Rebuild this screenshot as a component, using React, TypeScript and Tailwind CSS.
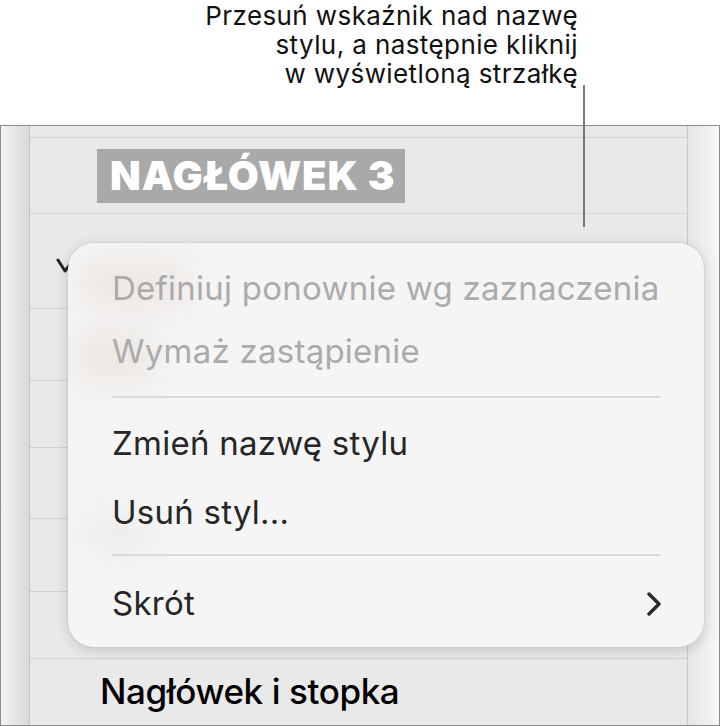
import React from "react";

const sans = { fontFamily: "Inter, 'Noto Sans', sans-serif" };

function Row({ h, children, last, top }: { h: string; children?: React.ReactNode; last?: boolean; top?: boolean }) {
  return (
    <div className={`${h} ${last ? "" : "border-b border-[#d3d3d3]"} flex ${top ? "items-start" : "items-center"}`}>
      {children}
    </div>
  );
}

function MenuItem({
  label,
  h,
  muted,
  arrow,
}: {
  label: string;
  h: string;
  muted?: boolean;
  arrow?: boolean;
}) {
  return (
    <div className={`${h} flex items-center justify-between pl-[44px] pr-[44px]`}>
      <span className={`whitespace-nowrap text-[33px] tracking-[0.25px] ${muted ? "text-[#ababab]" : "text-[#262626]"}`}>
        {label}
      </span>
      {arrow && (
        <svg width="16" height="24" viewBox="0 0 16 24" className="mr-[-2px]">
          <path d="M3 2 L13 12 L3 22" fill="none" stroke="#2a2a2a" strokeWidth="3.4" strokeLinecap="round" strokeLinejoin="round" />
        </svg>
      )}
    </div>
  );
}

export default function App() {
  return (
    <div className="relative w-[721px] h-[726px] bg-white overflow-hidden" style={sans}>
      {/* callout text */}
      <div className="h-[125px] pr-[143px] pt-[1px] text-right text-[26px] tracking-[0.4px] leading-[29px] text-[#111]">
        <div>Przesuń wskaźnik nad nazwę</div>
        <div>stylu, a następnie kliknij</div>
        <div>w wyświetloną strzałkę</div>
      </div>

      {/* styles sidebar */}
      <div className="flex h-[601px] border-t border-l border-r border-b border-[#8c8c8c] w-[720px]">
        <div className="w-[29px] bg-gradient-to-r from-[#f4f4f6] to-[#d9d9dd] border-r border-[#c4c4c4]" />
        <div className="flex-1 bg-[#e9e9e9] flex flex-col">
          <Row h="h-[12px]" />
          <Row h="h-[76px]">
            <div className="ml-[67px] h-[54px] w-[308px] bg-[#a9a9a9] flex items-center pl-[13px]">
              <span className="text-white font-black text-[40px] tracking-[0.9px] leading-none">NAGŁÓWEK 3</span>
            </div>
          </Row>
          <Row h="h-[95px]" top>
            <svg width="30" height="24" viewBox="0 0 30 24" className="ml-[24px] mt-[41px] overflow-visible">
              <path d="M4 5 L11 16 L28 -6" fill="none" stroke="#262626" strokeWidth="3" strokeLinecap="round" strokeLinejoin="round" />
            </svg>
          </Row>
          <Row h="h-[72px]" />
          <Row h="h-[67px]" />
          <Row h="h-[71px]" />
          <Row h="h-[73px]" />
          <Row h="h-[67px]" />
          <Row h="h-[62px]" last>
            <span className="ml-[70px] mt-[3px] text-[35px] font-medium text-black tracking-[-0.4px]">Nagłówek i stopka</span>
          </Row>
        </div>
        <div className="w-[32px] bg-gradient-to-r from-[#e6e6e8] to-[#f6f6f8] border-l border-[#c8c8c8]" />
      </div>

      {/* pointer line of the callout */}
      <div className="absolute left-[583px] top-[85px] w-[2px] h-[142px] bg-[#7a7a7a]" />

      {/* context menu */}
      <div className="absolute left-[68px] top-[243px] w-[636px] h-[404px] rounded-[26px] bg-[#f5f5f5] shadow-[0_3px_14px_rgba(0,0,0,0.16),0_0_2px_rgba(0,0,0,0.12)] overflow-hidden">
        <div className="absolute left-[10px] top-[14px] w-[110px] h-[52px] rounded-full bg-[#e6dbd3] opacity-50 blur-[16px]" />
        <div className="absolute left-[0px] top-[90px] w-[90px] h-[50px] rounded-full bg-[#e4d9d1] opacity-50 blur-[16px]" />
        <div className="absolute left-[10px] top-[270px] w-[80px] h-[40px] rounded-full bg-[#e6e0dc] opacity-40 blur-[16px]" />
        <div className="relative flex flex-col pt-[14px]">
          <MenuItem label="Definiuj ponownie wg zaznaczenia" h="h-[64px]" muted />
          <MenuItem label="Wymaż zastąpienie" h="h-[62px]" muted />
          <div className="h-[28px] flex items-center px-[44px]">
            <div className="h-[2px] w-full bg-[#dadada]" />
          </div>
          <MenuItem label="Zmień nazwę stylu" h="h-[66px]" />
          <MenuItem label="Usuń styl..." h="h-[72px]" />
          <div className="h-[12px] flex items-center px-[44px]">
            <div className="h-[2px] w-full bg-[#dadada]" />
          </div>
          <MenuItem label="Skrót" h="h-[86px]" arrow />
        </div>
      </div>
    </div>
  );
}
